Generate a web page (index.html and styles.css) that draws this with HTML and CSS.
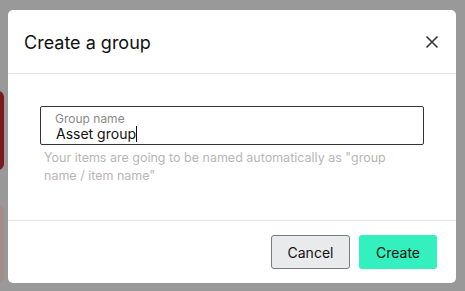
FILE: index.html
```html
<!DOCTYPE html>
<html lang="en">
<head>
    <meta charset="UTF-8">
    <meta name="viewport" content="width=device-width, initial-scale=1.0">
    <title>Create a group</title>
    <link rel="stylesheet" href="styles.css">
</head>
<body>
    <!-- page content behind the overlay -->
    <div class="behind behind-top"></div>
    <div class="behind behind-bottom"></div>

    <div class="modal">
        <div class="modal-header">
            <h2>Create a group</h2>
            <button class="close-button" aria-label="Close">
                <svg width="14" height="14" viewBox="0 0 14 14">
                    <path d="M1.5 1.5 L12.5 12.5 M12.5 1.5 L1.5 12.5" stroke="#333" stroke-width="1.6" fill="none"/>
                </svg>
            </button>
        </div>

        <div class="modal-body">
            <div class="field">
                <span class="field-label">Group name</span>
                <span class="field-value">Asset group<span class="caret"></span></span>
            </div>
            <p class="hint">Your items are going to be named automatically as "group name / item name"</p>
        </div>

        <div class="modal-footer">
            <button class="btn btn-cancel">Cancel</button>
            <button class="btn btn-create">Create</button>
        </div>
    </div>
</body>
</html>
```

FILE: styles.css
```css
html, body {
    margin: 0;
    height: 100%;
}
body {
    background-color: #999;
    font-family: Inter, "Open Sans", sans-serif;
    color: #111;
    padding: 10px 9px 8px 8px;
    box-sizing: border-box;
    position: relative;
    overflow: hidden;
}
.behind {
    position: absolute;
    left: -10px;
    width: 14px;
    border-radius: 6px;
}
.behind-top {
    top: 91px;
    height: 79px;
    background-color: #7b1a1c;
}
.behind-bottom {
    top: 205px;
    height: 78px;
    background-color: #a28d8a;
}
.modal {
    position: relative;
    background: #fff;
    border-radius: 5px;
    height: 273px;
    display: flex;
    flex-direction: column;
}
.modal-header {
    height: 63px;
    display: flex;
    align-items: center;
    justify-content: space-between;
    padding: 0 17px 0 16px;
    border-bottom: 1px solid #e2e2e2;
}
.modal-header h2 {
    margin: 0;
    font-size: 18px;
    font-weight: 400;
    padding-top: 2px;
}
.close-button {
    background: none;
    border: none;
    padding: 0;
    width: 14px;
    height: 14px;
    cursor: pointer;
}
.close-button svg {
    display: block;
}
.modal-body {
    flex: 1;
    padding: 32px 32px 0 32px;
    border-bottom: 1px solid #e2e2e2;
}
.field {
    height: 39px;
    box-sizing: border-box;
    border: 1px solid #333;
    border-radius: 2px;
    padding: 5px 14px 0;
    display: flex;
    flex-direction: column;
}
.field-label {
    font-size: 12px;
    line-height: 14px;
    color: #8a8a8a;
}
.field-value {
    font-size: 14px;
    line-height: 16px;
    color: #111;
    padding-left: 1px;
}
.caret {
    display: inline-block;
    width: 1px;
    height: 16px;
    background: #111;
    vertical-align: -3px;
}
.hint {
    margin: 4px 0 0 4px;
    font-size: 12.5px;
    line-height: 18px;
    color: #b8b6b6;
    width: 345px;
}
.modal-footer {
    height: 62px;
    display: flex;
    justify-content: flex-end;
    align-items: center;
    gap: 9px;
    padding: 0 19px 0 0;
}
.btn {
    height: 34px;
    font-family: inherit;
    font-size: 14px;
    border-radius: 3px;
    cursor: pointer;
    color: #111;
}
.btn-cancel {
    width: 79px;
    background-color: #e9eaec;
    border: 1px solid #7c7c7c;
}
.btn-create {
    width: 78px;
    background-color: #33f0be;
    border: none;
}
```
